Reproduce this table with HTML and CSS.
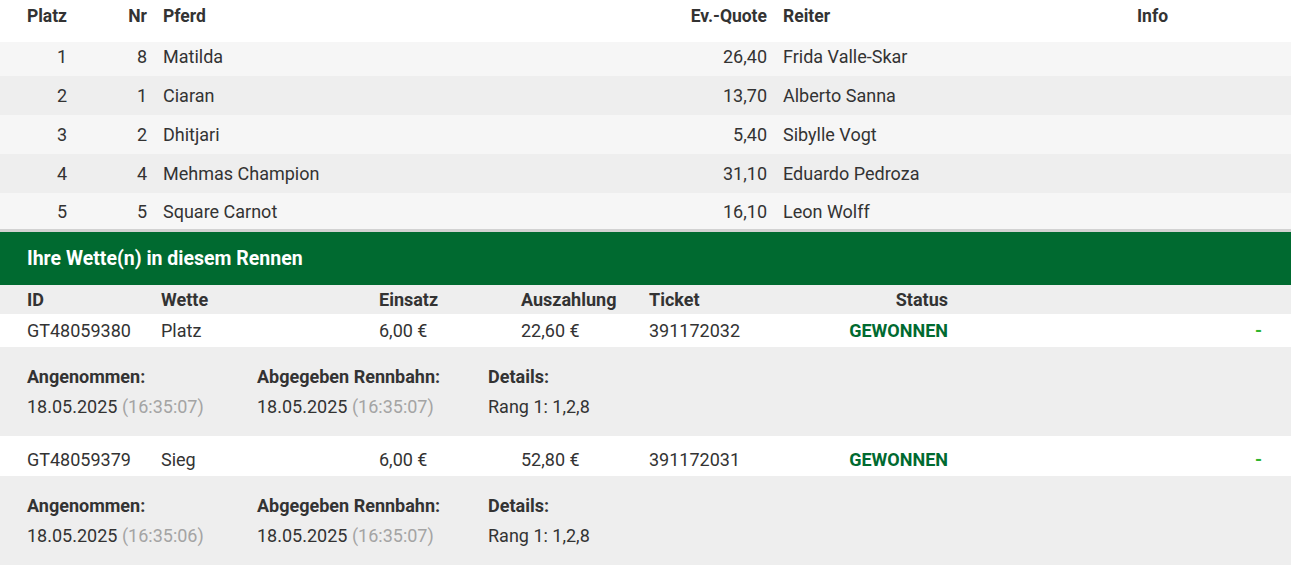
FILE: index.html
```html
<!DOCTYPE html>
<html lang="de">
<head>
<meta charset="utf-8">
<title>Ergebnis</title>
<link rel="stylesheet" href="styles.css">
</head>
<body>
<div class="page">
  <div class="results">
    <div class="rrow rhead">
      <div class="c num">Platz</div>
      <div class="c num">Nr</div>
      <div class="c">Pferd</div>
      <div class="c num">Ev.-Quote</div>
      <div class="c">Reiter</div>
      <div class="c">Info</div>
    </div>
    <div class="rrow r1 light">
      <div class="c num">1</div><div class="c num">8</div><div class="c">Matilda</div><div class="c num">26,40</div><div class="c">Frida Valle-Skar</div><div class="c"></div>
    </div>
    <div class="rrow dark">
      <div class="c num">2</div><div class="c num">1</div><div class="c">Ciaran</div><div class="c num">13,70</div><div class="c">Alberto Sanna</div><div class="c"></div>
    </div>
    <div class="rrow light">
      <div class="c num">3</div><div class="c num">2</div><div class="c">Dhitjari</div><div class="c num">5,40</div><div class="c">Sibylle Vogt</div><div class="c"></div>
    </div>
    <div class="rrow dark">
      <div class="c num">4</div><div class="c num">4</div><div class="c">Mehmas Champion</div><div class="c num">31,10</div><div class="c">Eduardo Pedroza</div><div class="c"></div>
    </div>
    <div class="rrow r5 light">
      <div class="c num">5</div><div class="c num">5</div><div class="c">Square Carnot</div><div class="c num">16,10</div><div class="c">Leon Wolff</div><div class="c"></div>
    </div>
  </div>

  <div class="bets-title">Ihre Wette(n) in diesem Rennen</div>

  <div class="bets">
    <div class="brow bhead">
      <div class="b">ID</div>
      <div class="b">Wette</div>
      <div class="b">Einsatz</div>
      <div class="b">Auszahlung</div>
      <div class="b">Ticket</div>
      <div class="b right">Status</div>
      <div class="b"></div>
    </div>
    <div class="brow bmain">
      <div class="b">GT48059380</div>
      <div class="b">Platz</div>
      <div class="b">6,00 €</div>
      <div class="b">22,60 €</div>
      <div class="b">391172032</div>
      <div class="b right won">GEWONNEN</div>
      <div class="b dash">-</div>
    </div>
    <div class="details">
      <div class="d">
        <div class="dl">Angenommen:</div>
        <div class="dv">18.05.2025 <span class="time">(16:35:07)</span></div>
      </div>
      <div class="d">
        <div class="dl">Abgegeben Rennbahn:</div>
        <div class="dv">18.05.2025 <span class="time">(16:35:07)</span></div>
      </div>
      <div class="d">
        <div class="dl">Details:</div>
        <div class="dv">Rang 1: 1,2,8</div>
      </div>
    </div>
    <div class="brow bmain second">
      <div class="b">GT48059379</div>
      <div class="b">Sieg</div>
      <div class="b">6,00 €</div>
      <div class="b">52,80 €</div>
      <div class="b">391172031</div>
      <div class="b right won">GEWONNEN</div>
      <div class="b dash">-</div>
    </div>
    <div class="details last">
      <div class="d">
        <div class="dl">Angenommen:</div>
        <div class="dv">18.05.2025 <span class="time">(16:35:06)</span></div>
      </div>
      <div class="d">
        <div class="dl">Abgegeben Rennbahn:</div>
        <div class="dv">18.05.2025 <span class="time">(16:35:07)</span></div>
      </div>
      <div class="d">
        <div class="dl">Details:</div>
        <div class="dv">Rang 1: 1,2,8</div>
      </div>
    </div>
  </div>
</div>
</body>
</html>
```

FILE: styles.css
```css
* { box-sizing: border-box; }
html, body { margin: 0; padding: 0; background: #fff; }
body {
  font-family: Roboto, "Liberation Sans", sans-serif;
  font-size: 18px;
  color: #333;
  width: 1291px;
  overflow: hidden;
}
.page { width: 1291px; }

.rrow {
  display: grid;
  grid-template-columns: 75px 80px 485px 135px 354px 162px;
  align-items: center;
  height: 39px;
}
.rrow .c { padding: 0 8px; white-space: nowrap; }
.rrow .num { text-align: right; }
.rhead { height: 42px; font-weight: 700; font-size: 17.5px; align-items: start; padding-top: 4px; }
.rhead .c { line-height: 24px; }
.r1 { height: 34px; align-items: start; padding-top: 3px; }
.r1 .c { line-height: 24px; }
.r5 { height: 36px; padding-top: 1px; }
.light { background: #f6f6f6; }
.dark { background: #eeeeee; }
.results { border-bottom: 3px solid #d2d2d2; }

.bets-title {
  background: #006a30;
  color: #fff;
  font-weight: 700;
  font-size: 19.5px;
  height: 53px;
  line-height: 53px;
  padding-left: 27px;
}

.brow {
  display: grid;
  grid-template-columns: 153px 218px 142px 128px 119px 196px 1fr;
  align-items: center;
}
.brow .b { padding: 0 8px; white-space: nowrap; }
.brow .b:first-child { padding-left: 27px; }
.brow .right { text-align: right; }
.bhead { background: #eeeeee; height: 29px; font-weight: 700; }
.bmain { background: #fff; height: 33px; }
.bmain.second { height: 40px; padding-top: 7px; }
.won { color: #006a30; font-weight: 700; }
.dash { color: #2fb52f; font-weight: 700; text-align: right; padding-right: 29px !important; }

.details {
  background: #eeeeee;
  display: grid;
  grid-template-columns: 230px 231px 1fr;
  padding: 18px 0 0 27px;
  height: 89px;
}
.details.last { height: 90px; }
.dl { font-weight: 700; line-height: 24px; }
.dv { line-height: 24px; margin-top: 6px; }
.time { color: #a4a4a4; }
```
